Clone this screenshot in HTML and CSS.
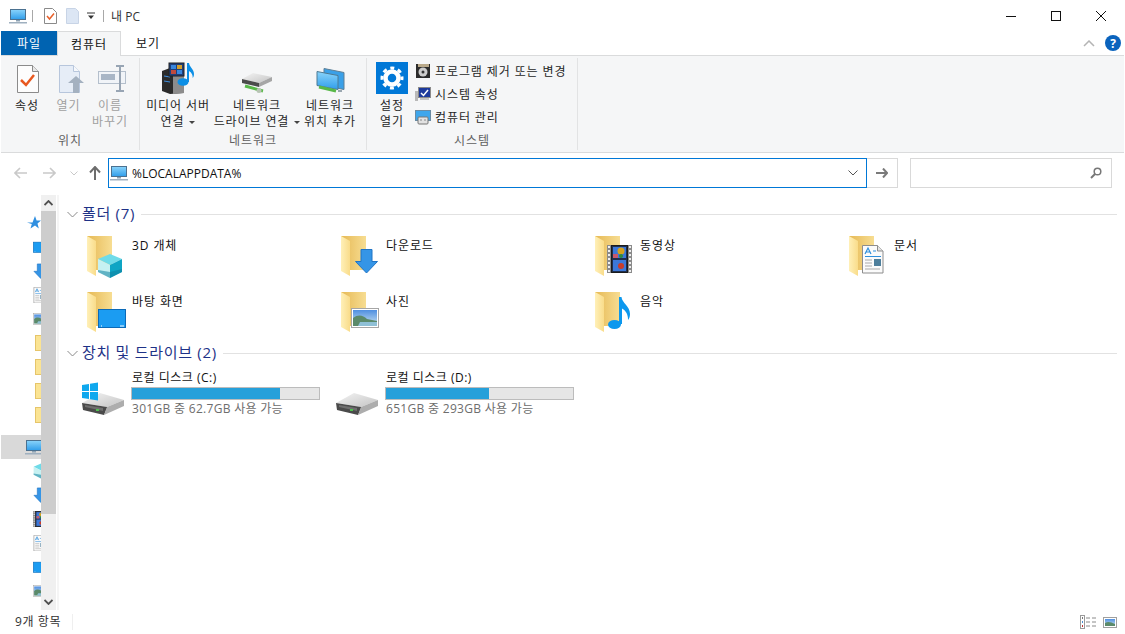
FILE: index.html
```html
<!DOCTYPE html>
<html lang="ko">
<head>
  <meta charset="UTF-8">
  <title>내 PC</title>
  <link rel="stylesheet" href="styles.css">
</head>
<body>
  <!-- shared icon parts -->
  <svg class="defs" width="0" height="0">
    <defs>
      <linearGradient id="screen" x1="0" y1="0" x2="0" y2="1"><stop offset="0" stop-color="#8ad4fb"/><stop offset="1" stop-color="#2f9dea"/></linearGradient>
      <linearGradient id="back" x1="0" y1="0" x2="1" y2="0"><stop offset="0" stop-color="#e6b955"/><stop offset="1" stop-color="#f7dd92"/></linearGradient>
      <linearGradient id="flap" x1="0" y1="0" x2="1" y2="0"><stop offset="0" stop-color="#fff0b8"/><stop offset="1" stop-color="#f9dc8a"/></linearGradient>
      <linearGradient id="sky" x1="0" y1="0" x2="0" y2="1"><stop offset="0" stop-color="#4f8fe0"/><stop offset="1" stop-color="#cfe6f2"/></linearGradient>
      <linearGradient id="disk" x1="0" y1="0" x2="1" y2="1"><stop offset="0" stop-color="#f4f4f4"/><stop offset="1" stop-color="#c4c4c4"/></linearGradient>

      <g id="pc">
        <rect x="1.500" y="1.500" width="15" height="10" fill="url(#screen)" stroke="#4b7190"/>
        <rect x="7" y="12" width="4" height="1.500" fill="#8da2b3"/>
        <rect x="0" y="14" width="18" height="1.500" fill="#9fb0bf"/>
      </g>
      <g id="folder">
        <path d="M7 4h25v34H16z" fill="url(#back)"/>
        <path d="M7 4l9 5v35l-9-5z" fill="url(#flap)"/>
      </g>
      <g id="cube">
        <path d="M30 22l12 5-12 6-12-6z" fill="#6fdbe8"/>
        <path d="M18 27l12 6v13l-12-6z" fill="#c6f1f2"/>
        <path d="M42 27l-12 6v13l12-6z" fill="#0ea5c4"/>
        <path d="M30 40l12-3v3l-12 6-12-6v-2z" fill="#0f7f9e" opacity=".55"/>
      </g>
      <g id="down">
        <path d="M27 17.500h11v12h5.500L32.500 41 21.500 29.500H27z" fill="#3595e6" stroke="#1f74c6"/>
      </g>
      <g id="film">
        <rect x="19" y="13" width="25" height="28" fill="#8b8b8b"/>
        <path d="M21 14v26M42 14v26" stroke="#efefef" stroke-width="2" stroke-dasharray="2 2"/>
        <rect x="23.500" y="13.500" width="16" height="27" fill="#1f2f4f" stroke="#1b1b1b"/>
        <rect x="25" y="15" width="13" height="11" fill="#3c78d8"/>
        <rect x="25" y="28" width="13" height="11" fill="#3c78d8"/>
        <circle cx="33" cy="19" r="3.500" fill="#d6a21e"/>
        <circle cx="33" cy="24" r="2" fill="#2f8a3c"/>
        <circle cx="33" cy="34" r="3" fill="#c93c2a"/>
        <rect x="25" y="22" width="5" height="4" fill="#c9586a"/>
      </g>
      <g id="paper">
        <path d="M20.500 13.500h15l5.500 5.500v22H20.500z" fill="#fbfbfb" stroke="#8d8d8d"/>
        <path d="M35.500 13.500v5.500H41" fill="#e4e4e4" stroke="#8d8d8d"/>
        <path d="M23 22l3-6 3 6M24 20h4" fill="none" stroke="#2f8fdc" stroke-width="1.200"/>
        <path d="M31 19h3M23 24.500h16" stroke="#2f8fdc" stroke-width="1"/>
        <path d="M23 28h7M23 31h7M23 34h7M23 37h15" stroke="#a9a9a9"/>
        <rect x="32" y="27" width="7" height="7" fill="#4e7f9c"/>
      </g>
      <g id="desk">
        <rect x="18.500" y="21.500" width="27" height="18" fill="#1b9cf2" stroke="#0b6ab8"/>
        <path d="M21 38h1M40 38h4" stroke="#fff"/>
      </g>
      <g id="photo">
        <rect x="17.500" y="20.500" width="27" height="19" fill="#fff" stroke="#a6a6a6"/>
        <rect x="19" y="22" width="24" height="16" fill="url(#sky)"/>
        <path d="M19 30c5-4 10-3 14 1l10 2v5H19z" fill="#5b8a6a"/>
        <path d="M26 34h17v4H24z" fill="#8fc0d6"/>
      </g>
      <g id="note">
        <ellipse cx="26.500" cy="36.500" rx="6.500" ry="4.500" fill="#0c98ee"/>
        <path d="M31 36V9h2.500c.5 6 8.500 9 8.500 17 0 3-1 5-2 6 .3-6-3-10-6-11.500V36z" fill="#0c98ee"/>
      </g>
      <g id="drive">
        <path d="M18 1l24 7-17 7L0 11z" fill="url(#disk)"/>
        <path d="M0 11l25 4v1l-3 7-21-5z" fill="#4a4a4a"/>
        <path d="M25 15l17-7v6l-20 9z" fill="#adadad"/>
        <path d="M3 13l18 3v3L3 15z" fill="#6e6e6e"/>
        <rect x="14" y="17" width="3" height="2" fill="#4fc04f"/>
      </g>
    </defs>
  </svg>

  <div class="window">
    <header class="titlebar">
      <svg class="t-pc" width="18" height="16" viewBox="0 0 18 16"><use href="#pc"/></svg>
      <span class="t-sep t-sep-a"></span>
      <svg class="t-check" width="13" height="16" viewBox="0 0 13 16">
        <path d="M.5.5h8l4 4v11H.5z" fill="#fff" stroke="#8a8a8a"/>
        <path d="M3 8l2.500 3L10 5.500" fill="none" stroke="#e8602a" stroke-width="1.500"/>
      </svg>
      <svg class="t-doc" width="13" height="16" viewBox="0 0 13 16"><path d="M.5.500h9l3 3v12H.5z" fill="#dce6f4" stroke="#c8d4e6"/></svg>
      <svg class="t-drop" width="8" height="8" viewBox="0 0 8 8"><path d="M0 1h8" stroke="#333"/><path d="M1 3.500h6L4 7z" fill="#333"/></svg>
      <span class="t-sep t-sep-b"></span>
      <span class="t-title">내 PC</span>
      <div class="winctl">
        <button class="winbtn"><svg width="10" height="10" viewBox="0 0 10 10"><path d="M0 5.500h10" stroke="#111"/></svg></button>
        <button class="winbtn"><svg width="10" height="10" viewBox="0 0 10 10"><rect x=".5" y=".5" width="9" height="9" fill="none" stroke="#111"/></svg></button>
        <button class="winbtn"><svg width="10" height="10" viewBox="0 0 10 10"><path d="M0 0l10 10M10 0L0 10" stroke="#111"/></svg></button>
      </div>
    </header>

    <nav class="tabs">
      <span class="tab tab-file">파일</span>
      <span class="tab tab-on">컴퓨터</span>
      <span class="tab tab-view">보기</span>
      <div class="tabs-right">
        <svg width="12" height="7" viewBox="0 0 12 7"><path d="M1 6l5-5 5 5" fill="none" stroke="#b4b4b4" stroke-width="1.500"/></svg>
        <span class="help">?</span>
      </div>
    </nav>

    <section class="ribbon">
      <div class="rgroup rg-loc">
        <div class="rbody">
          <div class="rbtn">
            <svg class="ric" width="32" height="32" viewBox="0 0 32 32">
              <path d="M6.500 3.500h15l6 6v21h-21z" fill="#fdfdfd" stroke="#8b8b8b"/>
              <path d="M21.500 3.500v6h6" fill="#e8e8e8" stroke="#8b8b8b"/>
              <path d="M10 18l5 5 8-10" fill="none" stroke="#e8581f" stroke-width="2.500"/>
            </svg>
            <span class="rlabel">속성</span>
          </div>
          <div class="rbtn off">
            <svg class="ric" width="32" height="32" viewBox="-3 0 32 32">
              <path d="M3.500 3.500h14l6 6v21h-20z" fill="#e6edf7" stroke="#b7c6dc"/>
              <path d="M17.500 3.500v6h6" fill="#f6f8fb" stroke="#b7c6dc"/>
              <path d="M12 21l8-7 8 7h-5v10h-6V21z" fill="#a4b1c0"/>
            </svg>
            <span class="rlabel">열기</span>
          </div>
          <div class="rbtn off">
            <svg class="ric" width="32" height="32" viewBox="-4 0 32 32">
              <rect x="0.500" y="9.500" width="27" height="12" fill="#f1f4f8" stroke="#b4bfcc"/>
              <rect x="3" y="12" width="14" height="6" fill="#a9b6c6"/>
              <path d="M18 4h8M22 4v25M18 29h8" fill="none" stroke="#98a5b4" stroke-width="2"/>
            </svg>
            <span class="rlabel">이름<br>바꾸기</span>
          </div>
        </div>
        <div class="rname">위치</div>
      </div>

      <div class="rgroup rg-net">
        <div class="rbody">
          <div class="rbtn">
            <svg class="ric" width="34" height="32" viewBox="0 0 34 32">
              <path d="M1 9l8-3 14 3v22l-14 1-8-3z" fill="#2b2b2b"/>
              <path d="M12 9l11 1v21l-11 1z" fill="#8c8c8c"/>
              <path d="M3 14l6 1M3 19l6 1" stroke="#3f8fe0"/>
              <rect x="8" y="1" width="15" height="13" fill="#1f3f7a" stroke="#222"/>
              <rect x="10" y="3" width="5" height="4" fill="#3a87dc"/>
              <rect x="16" y="3" width="5" height="4" fill="#d5a02a"/>
              <rect x="10" y="8" width="5" height="4" fill="#c04a3c"/>
              <rect x="16" y="8" width="5" height="4" fill="#3a87dc"/>
              <ellipse cx="22" cy="20" rx="5.500" ry="3.800" fill="#0c8fe6"/>
              <path d="M26 20V1h2c.5 4 5 6 5 11 0 2-.6 3-1.300 4 .2-4-2-6-3.700-7v11z" fill="#0c8fe6"/>
            </svg>
            <span class="rlabel">미디어 서버<br>연결 <i class="caret"></i></span>
          </div>
          <div class="rbtn">
            <svg class="ric" width="32" height="32" viewBox="0 0 32 32">
              <path d="M12 11l19 4-13 6L1 17z" fill="url(#disk)"/>
              <path d="M1 17l17 4v4L1 21z" fill="#4b4b4b"/>
              <path d="M18 21l13-6v4l-13 6z" fill="#a6a6a6"/>
              <path d="M4 24l18 5" stroke="#58b848" stroke-width="3"/>
              <circle cx="18" cy="28.500" r="2.500" fill="#b8c4b4"/>
            </svg>
            <span class="rlabel">네트워크<br>드라이브 연결 <i class="caret"></i></span>
          </div>
          <div class="rbtn">
            <svg class="ric" width="32" height="32" viewBox="0 0 32 32">
              <path d="M10 6.500l20 4v17l-20-4z" fill="#3aa0e8" stroke="#5d7f96"/>
              <path d="M3 9.500l21 4v14l-21-4z" fill="url(#screen)" stroke="#4d7a94"/>
              <path d="M5 25l17 4" stroke="#58b848" stroke-width="3"/>
              <path d="M24 29h4" stroke="#9aa7b0" stroke-width="2"/>
            </svg>
            <span class="rlabel">네트워크<br>위치 추가</span>
          </div>
        </div>
        <div class="rname">네트워크</div>
      </div>

      <div class="rgroup rg-sys">
        <div class="rbody">
          <div class="rbtn">
            <svg class="ric" width="32" height="32" viewBox="0 0 32 32">
              <rect width="32" height="32" fill="#0078d7"/>
              <circle cx="16" cy="16" r="6.500" fill="none" stroke="#fff" stroke-width="4.500"/>
              <circle cx="16" cy="16" r="10" fill="none" stroke="#fff" stroke-width="3" stroke-dasharray="4 3.850" stroke-dashoffset="2"/>
            </svg>
            <span class="rlabel">설정<br>열기</span>
          </div>
          <ul class="rlist">
            <li>
              <svg width="16" height="16" viewBox="0 0 16 16">
                <rect x="1" y="1" width="14" height="14" fill="#2b2b2b"/>
                <rect x="3" y="1" width="11" height="3" fill="#b9a98a"/>
                <circle cx="8" cy="9" r="4.500" fill="#ccc"/>
                <circle cx="8" cy="9" r="1.500" fill="#333"/>
              </svg>
              프로그램 제거 또는 변경
            </li>
            <li>
              <svg width="16" height="16" viewBox="0 0 16 16">
                <rect x="0" y="5" width="3" height="10" fill="#b9b9b9"/>
                <rect x="3.500" y="1.500" width="12" height="10" fill="#1d3a9c" stroke="#8a8a8a"/>
                <path d="M6 7l2.500 2.500L13 4" fill="none" stroke="#fff" stroke-width="1.500"/>
                <rect x="5" y="12" width="9" height="2" fill="#c4c4c4"/>
              </svg>
              시스템 속성
            </li>
            <li>
              <svg width="16" height="16" viewBox="0 0 16 16">
                <rect x=".5" y="1.500" width="15" height="10" fill="#3ea6ec" stroke="#6a8ba3"/>
                <rect x="3" y="8" width="10" height="7" rx="1" fill="#e2e2e2" stroke="#777"/>
                <path d="M5.500 11h1M9.500 11h1" stroke="#333"/>
              </svg>
              컴퓨터 관리
            </li>
          </ul>
        </div>
        <div class="rname">시스템</div>
      </div>
    </section>

    <section class="addrrow">
      <span class="navbtn"><svg width="14" height="12" viewBox="0 0 14 12"><path d="M6 1L1 6l5 5M1 6h12" fill="none" stroke="#c9c9c9" stroke-width="1.600"/></svg></span>
      <span class="navbtn"><svg width="14" height="12" viewBox="0 0 14 12"><path d="M8 1l5 5-5 5M13 6H1" fill="none" stroke="#c9c9c9" stroke-width="1.600"/></svg></span>
      <span class="navbtn nb-small"><svg width="8" height="5" viewBox="0 0 8 5"><path d="M.5.500L4 4 7.500.5" fill="none" stroke="#c9c9c9"/></svg></span>
      <span class="navbtn nb-small"><svg width="12" height="14" viewBox="0 0 12 14"><path d="M1 6.500L6 1l5 5.500M6 1v13" fill="none" stroke="#6d6d6d" stroke-width="2"/></svg></span>
      <div class="addr">
        <svg width="18" height="16" viewBox="0 0 18 16"><use href="#pc"/></svg>
        <span class="addr-text">%LOCALAPPDATA%</span>
        <svg class="addr-drop" width="10" height="6" viewBox="0 0 10 6"><path d="M.5.500L5 5 9.500.5" fill="none" stroke="#555"/></svg>
      </div>
      <div class="gobtn"><svg width="12" height="10" viewBox="0 0 12 10"><path d="M7 .5L11 5 7 9.500M11 5H0" fill="none" stroke="#7a7a7a" stroke-width="2"/></svg></div>
      <div class="search"><svg width="12" height="12" viewBox="0 0 12 12"><circle cx="7.500" cy="4.500" r="3.300" fill="none" stroke="#777" stroke-width="1.500"/><path d="M5 7l-4 4" stroke="#777" stroke-width="2"/></svg></div>
    </section>

    <main class="main">
      <aside class="nav">
        <div class="navlist">
          <div class="navrow nr-star"><svg width="14" height="14" viewBox="0 0 14 14"><path d="M8 0l1.600 4.500H14l-3.500 3 1.300 5L8 9.500 3.500 12.500 4.800 8 0 6.500h5.500z" fill="#2f8fe0"/></svg></div>
          <div class="navrow"><svg width="16" height="16" viewBox="18 16 28 28"><use href="#desk"/></svg></div>
          <div class="navrow"><svg width="16" height="16" viewBox="20 16 26 26"><use href="#down"/></svg></div>
          <div class="navrow"><svg width="16" height="16" viewBox="19 13 28 28"><use href="#paper"/></svg></div>
          <div class="navrow"><svg width="16" height="16" viewBox="17 16 28 28"><use href="#photo"/></svg></div>
          <div class="navrow nr-folder"><i class="mini"></i></div>
          <div class="navrow nr-folder"><i class="mini"></i></div>
          <div class="navrow nr-folder"><i class="mini"></i></div>
          <div class="navrow nr-folder"><i class="mini"></i></div>
          <div class="navrow nr-pc"><svg width="18" height="16" viewBox="0 0 18 16"><use href="#pc"/></svg></div>
          <div class="navrow"><svg width="16" height="16" viewBox="17 21 26 26"><use href="#cube"/></svg></div>
          <div class="navrow"><svg width="16" height="16" viewBox="20 16 26 26"><use href="#down"/></svg></div>
          <div class="navrow"><svg width="16" height="16" viewBox="19 13 28 28"><use href="#film"/></svg></div>
          <div class="navrow"><svg width="16" height="16" viewBox="19 13 28 28"><use href="#paper"/></svg></div>
          <div class="navrow"><svg width="16" height="16" viewBox="18 16 28 28"><use href="#desk"/></svg></div>
          <div class="navrow"><svg width="16" height="16" viewBox="17 16 28 28"><use href="#photo"/></svg></div>
        </div>
        <div class="scrollbar">
          <span class="sb-btn"><svg width="9" height="6" viewBox="0 0 9 6"><path d="M.5 5L4.500 1l4 4" fill="none" stroke="#505050" stroke-width="1.800"/></svg></span>
          <span class="sb-thumb"></span>
          <span class="sb-track"></span>
          <span class="sb-btn"><svg width="9" height="6" viewBox="0 0 9 6"><path d="M.5 1l4 4 4-4" fill="none" stroke="#505050" stroke-width="1.800"/></svg></span>
        </div>
      </aside>

      <div class="content">
        <h2 class="ghead">
          <svg width="11" height="7" viewBox="0 0 11 7"><path d="M.5 1l5 5 5-5" fill="none" stroke="#8a8a8a"/></svg>
          <span>폴더 (7)</span>
          <i class="gline"></i>
        </h2>
        <div class="grid">
          <div class="item"><svg width="48" height="48" viewBox="0 0 48 48"><use href="#folder"/><use href="#cube"/></svg><span class="iname">3D 개체</span></div>
          <div class="item"><svg width="48" height="48" viewBox="0 0 48 48"><use href="#folder"/><use href="#down"/></svg><span class="iname">다운로드</span></div>
          <div class="item"><svg width="48" height="48" viewBox="0 0 48 48"><use href="#folder"/><use href="#film"/></svg><span class="iname">동영상</span></div>
          <div class="item"><svg width="48" height="48" viewBox="0 0 48 48"><use href="#folder"/><use href="#paper"/></svg><span class="iname">문서</span></div>
          <div class="item"><svg width="48" height="48" viewBox="0 0 48 48"><use href="#folder"/><use href="#desk"/></svg><span class="iname">바탕 화면</span></div>
          <div class="item"><svg width="48" height="48" viewBox="0 0 48 48"><use href="#folder"/><use href="#photo"/></svg><span class="iname">사진</span></div>
          <div class="item"><svg width="48" height="48" viewBox="0 0 48 48"><use href="#folder"/><use href="#note"/></svg><span class="iname">음악</span></div>
        </div>

        <h2 class="ghead">
          <svg width="11" height="7" viewBox="0 0 11 7"><path d="M.5 1l5 5 5-5" fill="none" stroke="#8a8a8a"/></svg>
          <span>장치 및 드라이브 (2)</span>
          <i class="gline"></i>
        </h2>
        <div class="drives">
          <div class="drive">
            <svg class="dico" width="48" height="48" viewBox="0 0 48 48">
              <use href="#drive" x="2" y="13"/>
              <path d="M2 6l7-1v7H2zM10 4.800l8-1.300v8.500h-8zM2 13h7v7l-7-1zM10 13h8v8.500l-8-1.300z" fill="#0fa8ee"/>
            </svg>
            <div class="dinfo">
              <span class="dname">로컬 디스크 (C:)</span>
              <div class="dbar"><i class="dfill" style="width:79.200%"></i></div>
              <span class="dfree">301GB 중 62.7GB 사용 가능</span>
            </div>
          </div>
          <div class="drive">
            <svg class="dico" width="48" height="48" viewBox="0 0 48 48"><use href="#drive" x="2" y="13"/></svg>
            <div class="dinfo">
              <span class="dname">로컬 디스크 (D:)</span>
              <div class="dbar"><i class="dfill" style="width:55%"></i></div>
              <span class="dfree">651GB 중 293GB 사용 가능</span>
            </div>
          </div>
        </div>
      </div>
    </main>

    <footer class="status">
      <span class="count">9개 항목</span>
      <div class="views">
        <svg width="16" height="14" viewBox="0 0 16 14">
          <rect x=".5" y=".5" width="4" height="13" fill="#fff" stroke="#9a9a9a"/>
          <rect x="2" y="2" width="1" height="2" fill="#777"/><rect x="2" y="6" width="1" height="2" fill="#4a90d0"/><rect x="2" y="10" width="1" height="2" fill="#c03030"/>
          <path d="M6 3h4M12 3h4M6 7h4M12 7h4M6 11h4M12 11h4" stroke="#8a8a8a"/>
        </svg>
        <svg width="14" height="11" viewBox="0 0 14 11">
          <rect x=".5" y=".5" width="13" height="10" fill="#fff" stroke="#9f9f9f"/>
          <rect x="2" y="2" width="10" height="7" fill="url(#sky)"/>
          <path d="M2 6c3-2 6-1 10 1v2H2z" fill="#5b8a6a"/>
        </svg>
      </div>
    </footer>
  </div>
</body>
</html>
```

FILE: styles.css
```css
* {
  box-sizing: border-box;
}
html, body {
  margin: 0;
  height: 100%;
  overflow: hidden;
}
body {
  background: #fff;
  color: #111;
  font-family: "Open Sans", "Noto Sans CJK KR", sans-serif;
  font-size: 12px;
}
svg {
  display: block;
  flex: none;
}
.defs {
  position: absolute;
}
.window {
  display: flex;
  flex-direction: column;
  height: 634px;
  padding: 0 1px;
}

/* title bar */
.titlebar {
  display: flex;
  align-items: center;
  flex: none;
  height: 31px;
  padding-left: 8px;
}
.t-sep {
  width: 1px;
  height: 12px;
  background: #a8a8a8;
}
.t-sep-a {
  margin-left: 5px;
}
.t-check {
  margin-left: 11px;
}
.t-doc {
  margin-left: 9px;
}
.t-drop {
  margin-left: 8px;
}
.t-sep-b {
  margin-left: 8px;
}
.t-title {
  margin-left: 7px;
  color: #333;
}
.winctl {
  display: flex;
  margin-left: auto;
  margin-right: 1px;
  align-self: stretch;
}
.winbtn {
  display: flex;
  align-items: center;
  justify-content: center;
  width: 45px;
  padding: 0;
  border: none;
  background: none;
}

/* tabs */
.tabs {
  display: flex;
  flex: none;
  height: 25px;
  border-bottom: 1px solid #dadbdc;
}
.tab {
  display: flex;
  align-items: center;
  justify-content: center;
  height: 24px;
  letter-spacing: .9px;
}
.tab-file {
  width: 56px;
  background: #0063b1;
  color: #fff;
}
.tab-on {
  width: 64px;
  height: 25px;
  background: #f5f6f7;
  border: 1px solid #dadbdc;
  border-bottom: none;
}
.tab-view {
  width: 54px;
}
.tabs-right {
  display: flex;
  align-items: center;
  gap: 10px;
  margin-left: auto;
  padding-right: 3px;
}
.help {
  display: flex;
  align-items: center;
  justify-content: center;
  width: 16px;
  height: 16px;
  border-radius: 50%;
  background: #0a63bd;
  color: #fff;
  font-size: 12px;
  font-weight: 700;
  letter-spacing: 0;
}

/* ribbon */
.ribbon {
  display: flex;
  flex: none;
  height: 97px;
  padding-top: 2px;
  background: #f5f6f7;
  border-bottom: 1px solid #dadbdc;
  letter-spacing: .9px;
}
.rgroup {
  display: flex;
  flex-direction: column;
  height: 92px;
  border-right: 1px solid #e2e3e4;
}
.rg-loc {
  width: 139px;
}
.rg-net {
  width: 227px;
}
.rg-sys {
  width: 211px;
}
.rbody {
  flex: 1;
  display: grid;
  padding-left: 5px;
}
.rg-loc .rbody {
  grid-template-columns: 42px 41px 42px;
}
.rg-net .rbody {
  grid-template-columns: 66px 92px 54px;
}
.rg-sys .rbody {
  grid-template-columns: 40px 1fr;
}
.rbtn {
  display: flex;
  flex-direction: column;
  align-items: center;
  padding-top: 4px;
}
.rlabel {
  margin-top: 4px;
  line-height: 15.500px;
  text-align: center;
  white-space: nowrap;
  color: #262626;
}
.off .rlabel {
  color: #a0a0a0;
}
.caret {
  display: inline-block;
  margin-left: 1px;
  vertical-align: middle;
  border: 3px solid transparent;
  border-top-color: #444;
  border-bottom: none;
}
.rname {
  height: 22px;
  padding-top: 2px;
  line-height: 20px;
  text-align: center;
  color: #5f5f5f;
}
.rlist {
  display: flex;
  flex-direction: column;
  margin: 0;
  padding: 1px 0 0 3px;
  list-style: none;
}
.rlist li {
  display: flex;
  align-items: center;
  gap: 4px;
  height: 23px;
  color: #262626;
  white-space: nowrap;
}

/* address row */
.addrrow {
  display: flex;
  flex: none;
  height: 42px;
  padding: 5px 0 7px 6px;
}
.navbtn {
  display: flex;
  align-items: center;
  justify-content: center;
  width: 28px;
}
.nb-small {
  width: 21px;
}
.addr {
  display: flex;
  align-items: center;
  gap: 4px;
  width: 759px;
  margin-left: 3px;
  padding: 0 8px 0 1px;
  border: 1px solid #0078d7;
}
.addr-drop {
  margin-left: auto;
}
.gobtn {
  display: flex;
  align-items: center;
  justify-content: center;
  width: 31px;
  border: 1px solid #d9d9d9;
  border-left: none;
}
.search {
  display: flex;
  align-items: center;
  justify-content: flex-end;
  width: 202px;
  margin-left: 12px;
  padding-right: 9px;
  border: 1px solid #d9d9d9;
}

/* main area */
.main {
  flex: 1;
  display: flex;
  min-height: 0;
}
.nav {
  display: flex;
  flex: none;
  width: 58px;
  border-right: 2px solid #f5f5f5;
}
.navlist {
  width: 40px;
  padding-top: 16px;
  overflow: hidden;
}
.navrow {
  display: flex;
  align-items: center;
  width: 60px;
  height: 24px;
  padding-left: 32px;
}
.nr-star {
  padding-left: 26px;
}
.nr-folder {
  padding-left: 34px;
}
.nr-pc {
  margin-top: 8px;
  padding-left: 24px;
  background: #d9d9d9;
}
.mini {
  display: block;
  width: 16px;
  height: 16px;
  background: #fbe493;
  border: 1px solid #e6c56a;
}
.scrollbar {
  display: flex;
  flex-direction: column;
  width: 15px;
  background: #f0f0f0;
}
.sb-btn {
  display: flex;
  align-items: center;
  justify-content: center;
  flex: none;
  height: 16px;
}
.sb-thumb {
  flex: none;
  height: 303px;
  background: #cdcdcd;
}
.sb-track {
  flex: 1;
}
.content {
  flex: 1;
  padding: 10px 7px 0 8px;
}
.ghead {
  display: flex;
  align-items: center;
  height: 18px;
  margin: 0;
  color: #1e3287;
  font-size: 15px;
  font-weight: 400;
  white-space: nowrap;
}
.ghead span {
  margin: 0 0 3px 4px;
  letter-spacing: .7px;
}
.gline {
  flex: 1;
  height: 1px;
  margin-left: 6px;
  background: #e2e2e2;
}
.grid {
  display: grid;
  grid-template-columns: repeat(4, 254px);
  grid-auto-rows: 56px;
  margin: 9px 0 0 13px;
}
.item {
  display: flex;
  gap: 4px;
}
.iname {
  margin-top: 6px;
  line-height: 16px;
  letter-spacing: .9px;
}
.drives {
  display: flex;
  margin: 8px 0 0 13px;
}
.drive {
  display: flex;
  gap: 3px;
  width: 254px;
}
.dico {
  margin-top: 9px;
}
.dinfo {
  display: flex;
  flex-direction: column;
  width: 189px;
}
.dname,
.dfree {
  padding-left: 1px;
  line-height: 16px;
}
.dname {
  letter-spacing: .5px;
}
.dbar {
  height: 13px;
  margin-top: 1px;
  background: #e6e6e6;
  border: 1px solid #bcbcbc;
}
.dfill {
  display: block;
  height: 100%;
  background: #26a0da;
}
.dfree {
  letter-spacing: .3px;
  margin-top: 1px;
  color: #6d6d6d;
}

/* status bar */
.status {
  display: flex;
  align-items: center;
  flex: none;
  height: 24px;
  padding: 0 7px 0 14px;
}
.count {
  padding-right: 11px;
  border-right: 1px solid #efefef;
  line-height: 16px;
  letter-spacing: .6px;
  color: #333;
}
.views {
  display: flex;
  align-items: center;
  gap: 7px;
  margin-left: auto;
}
```
